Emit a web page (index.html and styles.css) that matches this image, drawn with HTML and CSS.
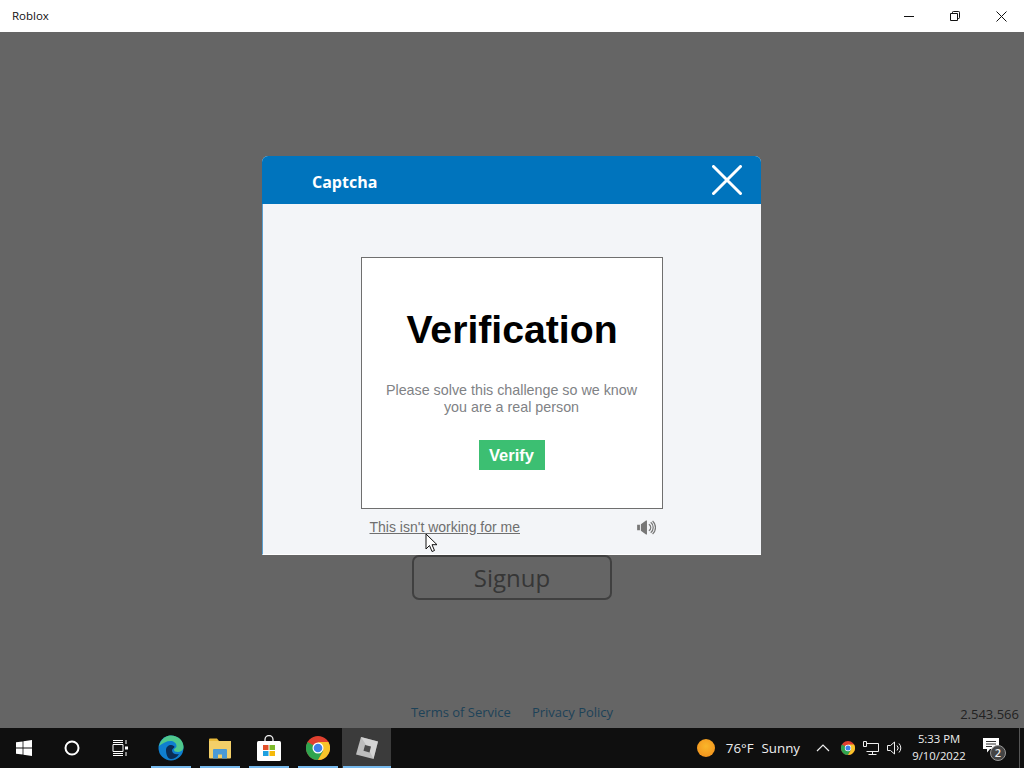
FILE: index.html
```html
<!DOCTYPE html>
<html lang="en">
<head>
<meta charset="utf-8">
<title>Roblox</title>
<link rel="stylesheet" href="styles.css">
</head>
<body>
<div class="window">
  <header class="titlebar">
    <span class="title">Roblox</span>
    <div class="controls">
      <span class="ctl"><svg width="10" height="10" viewBox="0 0 10 10"><path d="M0 5.500h10" stroke="#111" fill="none"/></svg></span>
      <span class="ctl"><svg width="10" height="10" viewBox="0 0 10 10"><path d="M.5 2.500h7v7h-7zM2.500 2.500V1.300a.8.8 0 0 1 .8-.8h5.400a.8.8 0 0 1 .8.8v5.400a.8.8 0 0 1-.8.8H7.500" stroke="#111" fill="none"/></svg></span>
      <span class="ctl"><svg width="11" height="11" viewBox="0 0 11 11"><path d="M.5.500l10 10M10.500.500l-10 10" stroke="#111" fill="none"/></svg></span>
    </div>
  </header>

  <main class="app">
    <button class="signup">Signup</button>
    <nav class="legal">
      <a>Terms of Service</a>
      <a>Privacy Policy</a>
    </nav>
    <span class="version">2.543.566</span>

    <section class="modal">
      <div class="modal-head">
        <h2>Captcha</h2>
        <svg class="modal-x" width="30" height="30" viewBox="0 0 30 30"><path d="M1.500 1.500l27 27M28.500 1.500l-27 27" stroke="#fff" stroke-width="3" stroke-linecap="round" fill="none"/></svg>
      </div>
      <div class="modal-body">
        <div class="challenge">
          <h1>Verification</h1>
          <p>Please solve this challenge so we know<br>you are a real person</p>
          <button class="verify">Verify</button>
        </div>
        <div class="challenge-foot">
          <a class="help">This isn't working for me</a>
          <svg width="19" height="15" viewBox="0 0 20 16"><path d="M0 5h3v6H0zM4 4.500L9.500.5h1v15h-1L4 11.500z" fill="#777"/><path d="M12.500 4.500a4 4 0 0 1 0 7M14.500 2.500a7 7 0 0 1 0 11M16.500 1a9.500 9.500 0 0 1 0 14" stroke="#777" stroke-width="1.300" fill="none"/></svg>
        </div>
      </div>
    </section>

    <svg class="cursor" width="14" height="20" viewBox="0 0 14 20"><path d="M1 1v15l3.500-3.500 2.500 6 2.500-1-2.500-5.800H12z" fill="#fff" stroke="#111" stroke-width="1"/></svg>
  </main>

  <footer class="taskbar">
    <div class="tb-left">
      <span class="tb"><svg width="16" height="16" viewBox="0 0 16 16"><path d="M0 2.300l6.600-.9v6.200H0zM7.400 1.300L16 0v7.600H7.400zM0 8.400h6.600v6.200L0 13.700zM7.400 8.400H16V16l-8.600-1.300z" fill="#fff"/></svg></span>
      <span class="tb"><svg width="16" height="16" viewBox="0 0 16 16"><circle cx="8" cy="8" r="6.500" stroke="#fff" stroke-width="2" fill="none"/></svg></span>
      <span class="tb"><svg width="16" height="16" viewBox="0 0 16 16"><path d="M1 .5h10M1 2.500h10M1 13.500h10M1 15.500h10M1 4.500h10v7H1zM14 0v4M14 12v4" stroke="#fff" fill="none"/><path d="M13 6.500h3v3h-3z" fill="#fff"/></svg></span>
    </div>
    <div class="tb-apps">
      <span class="tb app-on"><svg width="26" height="26" viewBox="0 0 26 26"><circle cx="13" cy="13" r="12.500" fill="#0f7fd0"/><path d="M1 11C3 3 9 .5 13 .5c7 0 12.500 5 12.500 11.500 0 3.500-3 5-6 5-2 0-3.500-1-3.500-2 0-2 2.500-1.500 2.500-4 0-3-3-5-6-5-4 0-7.500 2-11.500 5z" fill="#4fc88c"/><path d="M8 15c0-3 2.500-5 5-5 2 0 3.300 1 3.500 2-1 1.500-2.500 2-2.500 3.500 0 3 3.500 4.500 7 3.500-2 3.500-5 5-8 5-3.500 0-5-5-5-9z" fill="#0b2d55"/></svg></span>
      <span class="tb app-on"><svg width="24" height="22" viewBox="0 0 24 22"><path d="M1 2.500a1 1 0 0 1 1-1h7l2 2.500H1z" fill="#e8b93a"/><path d="M1 4h22v16.500a1 1 0 0 1-1 1H2a1 1 0 0 1-1-1z" fill="#f3cf68"/><path d="M6 12h12a1 1 0 0 1 1 1v8.500h-5v-4h-4v4H5V13a1 1 0 0 1 1-1z" fill="#4b9ad4"/></svg></span>
      <span class="tb app-on"><svg width="24" height="26" viewBox="0 0 24 26"><path d="M8 7V4.500a4 4 0 0 1 8 0V7" stroke="#eee" stroke-width="1.300" fill="none"/><rect y="6" width="24" height="20" rx="1.500" fill="#fff"/><path d="M6 10h5.500v5H6z" fill="#e2502a"/><path d="M12.500 10H18v5h-5.500z" fill="#7dba2a"/><path d="M6 16h5.500v5H6z" fill="#1fa0e0"/><path d="M12.500 16H18v5h-5.500z" fill="#f5b90a"/></svg></span>
      <span class="tb app-on"><svg width="24" height="24" viewBox="0 0 24 24"><use href="#chrome"/></svg></span>
      <span class="tb app-active"><svg width="24" height="24" viewBox="0 0 24 24"><path d="M6 1l17 4.500L18.500 23 1 18.500z" fill="#bdbdbd"/><path d="M6 1l17 4.500-4.500 17.500L13 12z" fill="#e3e3e3" opacity=".6"/><path d="M10 9l6 1.600-1.500 5.800-6-1.600z" fill="#4a4a4a"/></svg></span>
    </div>
    <div class="tray">
      <span class="sun"></span>
      <span class="weather">76°F</span>
      <span class="weather sunny">Sunny</span>
      <svg class="caret" width="14" height="8" viewBox="0 0 14 8"><path d="M1 7l6-6 6 6" stroke="#eee" stroke-width="1.200" fill="none"/></svg>
      <svg class="tray-chrome" width="14" height="14" viewBox="0 0 24 24"><use href="#chrome"/></svg>
      <svg class="tray-net" width="16" height="14" viewBox="0 0 16 14"><path d="M3.500 2.500h12v8h-12M.5.500h3v5h-3zM9.500 10.500v3M5.500 13.500h8" stroke="#eee" fill="none"/></svg>
      <svg class="tray-vol" width="16" height="14" viewBox="0 0 16 14"><path d="M.5 4.500h3L7.500 1v12l-4-3.500h-3zM10 4.500a3.500 3.500 0 0 1 0 5M12 2.500a6.500 6.500 0 0 1 0 9" stroke="#eee" fill="none"/></svg>
      <div class="clock"><span>5:33 PM</span><span>9/10/2022</span></div>
      <span class="notif">
        <svg width="16" height="15" viewBox="0 0 16 15"><path d="M0 0h16v11H7l-3 3.500V11H0z" fill="#fff"/><path d="M3 3.500h10M3 6h10M3 8.500h6" stroke="#333"/></svg>
        <span class="badge">2</span>
      </span>
      <span class="show-desktop"></span>
    </div>
  </footer>
</div>

<svg class="defs" width="0" height="0">
  <defs>
    <g id="chrome">
      <circle cx="12" cy="12" r="12" fill="#e0402f"/>
      <path d="M12 12L1.600 6A12 12 0 0 0 12 24l5.200-9z" fill="#2fa44f"/>
      <path d="M12 6h10.400A12 12 0 0 1 12 24l5.200-9z" fill="#f8c42a"/>
      <circle cx="12" cy="12" r="5.500" fill="#fff"/>
      <circle cx="12" cy="12" r="4.300" fill="#3f7fe8"/>
    </g>
  </defs>
</svg>
</body>
</html>
```
FILE: styles.css
```css
* { box-sizing: border-box; }
html, body { margin: 0; height: 100%; overflow: hidden; }
body { font-family: "Open Sans", "Noto Sans", sans-serif; }
.defs { position: absolute; }

.window { display: flex; flex-direction: column; height: 768px; }

.titlebar {
  height: 32px; flex: none; background: #fff;
  display: flex; align-items: center; justify-content: space-between;
  padding-left: 12px;
}
.title { font-size: 11.500px; line-height: 15px; margin-top: -2px; color: #111; }
.controls { display: flex; }
.ctl { width: 46px; height: 32px; display: flex; align-items: center; justify-content: center; }

.app {
  flex: 1; position: relative; background: #656565;
  display: flex; flex-direction: column; align-items: center;
  padding-top: 523px;
}
.signup {
  width: 200px; height: 45px; padding: 0;
  font: 24px "Open Sans", sans-serif; color: #363636;
  background: #656565; border: 2px solid #404040; border-radius: 7px;
}
.legal { display: flex; gap: 21px; margin-top: 102px; font-size: 13px; color: #1d4258; line-height: 20px; }
.version { position: absolute; right: 5px; bottom: 5px; font-size: 13px; line-height: 18px; color: #222; }

.modal {
  position: absolute; left: 262px; top: 124px; width: 499px; height: 399px;
  background: #f3f5f8; border-radius: 6px 6px 0 0; overflow: hidden;
  display: flex; flex-direction: column;
}
.modal-head {
  height: 48px; flex: none; background: #0074bd; color: #fff;
  display: flex; align-items: center; justify-content: space-between;
  padding: 4px 19px 0 50px;
}
.modal-head h2 { margin: 0; font-size: 16px; font-weight: 700; }
.modal-x { display: block; margin-top: -5px; }
.modal-body {
  flex: 1; display: flex; flex-direction: column; align-items: center;
  padding-top: 53px; font-family: "Liberation Sans", Arial, sans-serif;
  border-left: 1px solid #5a9fd0; border-bottom: 1px solid #fff;
  padding-right: 1px;
}

.challenge {
  width: 302px; height: 252px; background: #fff; border: 1px solid #6f6f6f;
  display: flex; flex-direction: column; align-items: center; text-align: center;
}
.challenge h1 { margin: 50px 0 0 1px; font-size: 39.200px; line-height: 44px; font-weight: 700; color: #000; }
.challenge p { margin: 30px 0 0; font-size: 14.300px; line-height: 17px; color: #808285; }
.verify {
  margin-top: 24px; width: 66px; height: 30px; padding: 0; border: 0;
  background: #3cbf72; color: #fff; font: 700 16.500px "Liberation Sans", Arial, sans-serif;
}
.challenge-foot { width: 302px; display: flex; align-items: center; justify-content: space-between; padding: 10px 7px 0 9px; }
.help { font-size: 14px; line-height: 17px; color: #6f6f6f; text-decoration: underline; }

.cursor { position: absolute; left: 425px; top: 501px; }

.taskbar { height: 40px; flex: none; background: #0f0f0f; display: flex; color: #eee; }
.tb-left { display: flex; margin-right: 2px; }
.tb-left .tb { width: 48px; }
.tb-apps { display: flex; }
.tb { width: 49px; height: 40px; display: flex; align-items: center; justify-content: center; position: relative; }
.app-on::after, .app-active::after {
  content: ""; position: absolute; left: 5px; right: 4px; bottom: 0; height: 2px; background: #76b9ed;
}
.app-active { background: #3b3b3b; }
.app-active::after { left: 1px; right: 0; }

.tray { margin-left: auto; display: flex; align-items: center; font-size: 13.300px; }
.sun { width: 18px; height: 18px; border-radius: 50%; background: radial-gradient(circle at 50% 40%, #f9b62a, #f08a1a); margin-right: 11px; }
.weather { line-height: 20px; }
.sunny { margin-left: 8px; }
.caret { margin-left: 16px; }
.tray-chrome { margin-left: 11px; }
.tray-net { margin-left: 8px; }
.tray-vol { margin-left: 8px; }
.clock { width: 72px; margin-top: -2px; display: flex; flex-direction: column; align-items: center; font-size: 11.300px; line-height: 17px; }
.notif { position: relative; margin-left: 6px; width: 26px; height: 26px; display: block; padding-top: 3px; }
.notif svg { display: block; margin-left: 2px; }
.badge {
  position: absolute; left: 9px; top: 10px; width: 16px; height: 16px; border-radius: 50%;
  background: #444; border: 1px solid #999; font-size: 11px; line-height: 14px; text-align: center; font-weight: 600;
}
.show-desktop { margin-left: 12px; width: 1px; height: 40px; background: #555; margin-right: 4px; }
```
